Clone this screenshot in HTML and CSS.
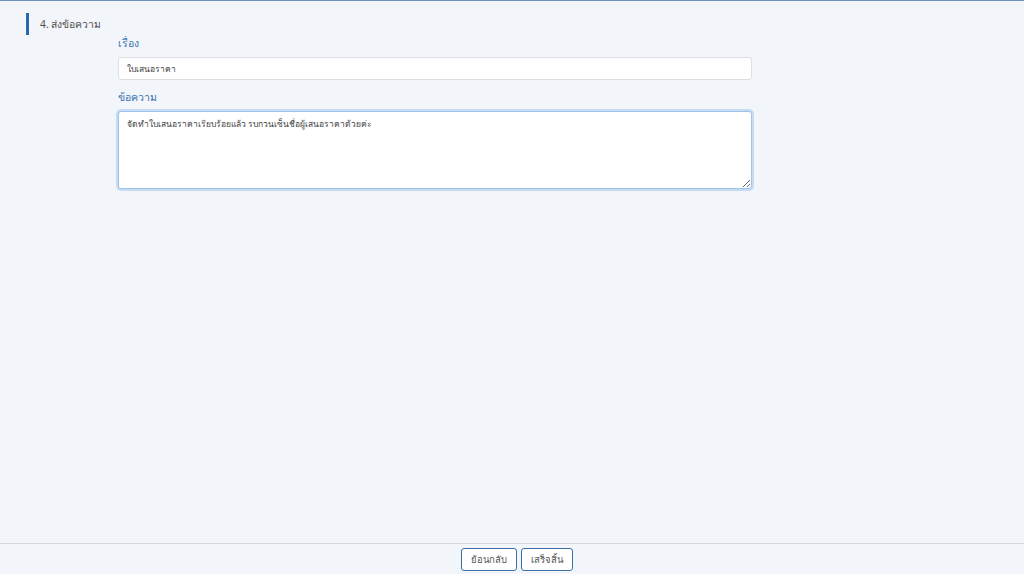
FILE: index.html
```html
<!DOCTYPE html>
<html lang="th">
<head>
    <meta charset="UTF-8">
    <meta name="viewport" content="width=device-width, initial-scale=1.0">
    <title>ส่งข้อความ</title>
    <link rel="stylesheet" href="styles.css">
</head>
<body>

<div class="page">
    <div class="content">
        <div class="section-title">4. ส่งข้อความ</div>

        <div class="form">
            <label class="field-label" for="subject">เรื่อง</label>
            <input id="subject" class="field-input" type="text" value="ใบเสนอราคา">

            <label class="field-label" for="message">ข้อความ</label>
            <textarea id="message" class="field-textarea focused">จัดทำใบเสนอราคาเรียบร้อยแล้ว รบกวนเซ็นชื่อผู้เสนอราคาด้วยค่ะ</textarea>
        </div>
    </div>

    <!-- Bottom action bar -->
    <div class="footer">
        <button class="btn">ย้อนกลับ</button>
        <button class="btn">เสร็จสิ้น</button>
    </div>
</div>

</body>
</html>
```

FILE: styles.css
```css
html, body {
    height: 100%;
}
body {
    margin: 0;
    background-color: #f2f5f9;
    font-family: "Noto Sans", "DejaVu Sans", sans-serif;
    color: #444;
}
.page {
    height: 100%;
    box-sizing: border-box;
    border-top: 1px solid #6b93bd;
    display: flex;
    flex-direction: column;
}
.content {
    flex: 1;
}
.section-title {
    margin: 12px 0 0 26px;
    padding: 3px 0 3px 11px;
    border-left: 3px solid #2a68ad;
    font-size: 10.3px;
    line-height: 16px;
    color: #505050;
}
.form {
    margin-left: 118px;
    width: 634px;
    display: flex;
    flex-direction: column;
}
.field-label {
    font-size: 10.5px;
    line-height: 16px;
    color: #3a73b3;
    margin-bottom: 6px;
}
.field-input {
    height: 23px;
    box-sizing: border-box;
    padding: 0 8px;
    border: 1px solid #dcdfe3;
    border-radius: 3px;
    background: #fff;
    font-family: inherit;
    font-size: 8.5px;
    color: #444;
    margin-bottom: 9px;
}
.field-textarea {
    height: 78px;
    box-sizing: border-box;
    padding: 5px 8px;
    border: 1px solid #9ec2e8;
    border-radius: 3px;
    background: #fff;
    font-family: inherit;
    font-size: 8.5px;
    color: #444;
    resize: vertical;
}
.field-textarea.focused {
    box-shadow: 0 0 0 2px #c6dcf3;
    outline: none;
}
.footer {
    height: 31px;
    box-sizing: border-box;
    padding-left: 10px;
    border-top: 1px solid #d4d8dd;
    display: flex;
    justify-content: center;
    align-items: center;
    gap: 4px;
}
.btn {
    height: 23px;
    padding: 0 9px;
    border: 1.5px solid #3a6ea5;
    border-radius: 3px;
    background: #fff;
    font-family: inherit;
    font-size: 9.5px;
    color: #555;
    cursor: pointer;
}
```
